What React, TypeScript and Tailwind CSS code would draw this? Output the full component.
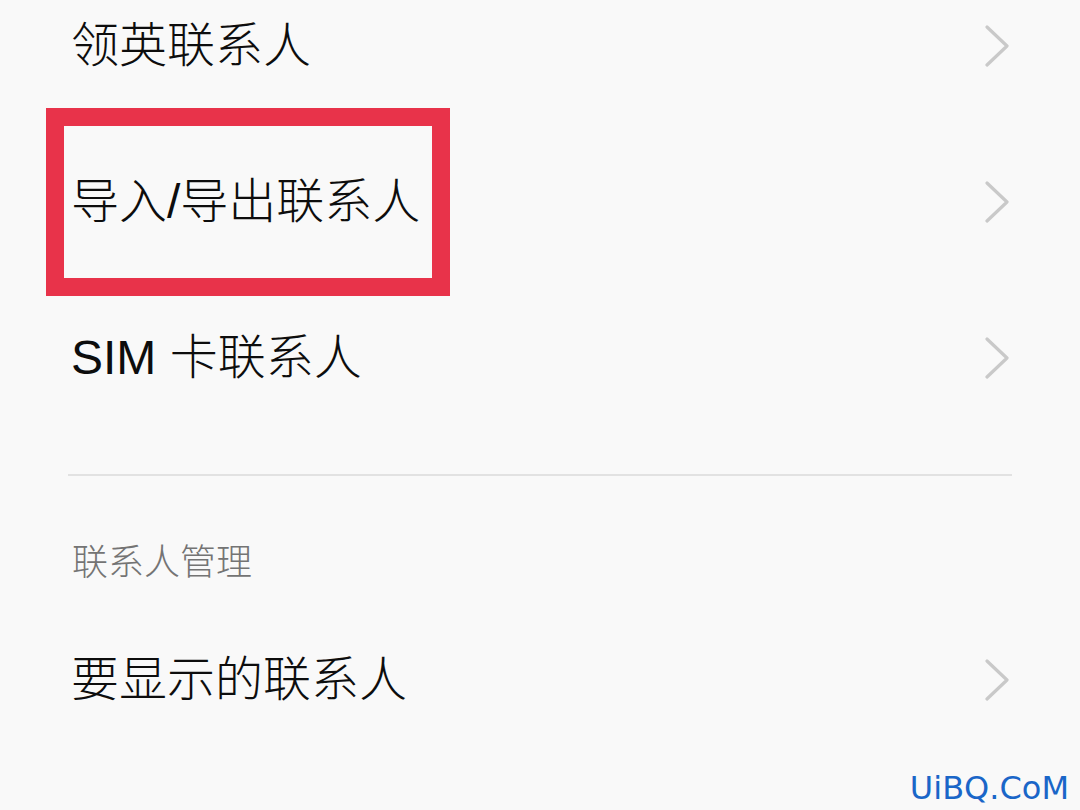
const cjk = "font-['Liberation_Sans','Noto_Sans_CJK_SC',sans-serif]";

function Row({ label }: { label: string }) {
  return (
    <div className="h-[156px] flex items-center justify-between pl-[71px] pr-[70px]">
      <span className={`${cjk} text-[48px] font-light leading-none text-[#0d0d0d]`}>{label}</span>
      <svg width="26" height="42" viewBox="0 0 26 42" fill="none" className="shrink-0">
        <path d="M3 2 L23 21 L3 40" stroke="#c9c9c9" strokeWidth="3.2" strokeLinecap="round" strokeLinejoin="round" />
      </svg>
    </div>
  );
}

export default function App() {
  return (
    <div className="relative w-[1080px] h-[810px] overflow-hidden bg-[#f9f9f9]">
      <div className="-mt-[32px] flex flex-col">
        {/* Contacts sources */}
        <Row label="领英联系人" />
        <Row label="导入/导出联系人" />
        <Row label="SIM 卡联系人" />

        <div className="mt-[38px] mx-[68px] h-[2px] bg-[#e2e2e2]" />

        {/* Management section */}
        <div className="mt-[62px] h-[50px] flex items-center pl-[72px]">
          <span className={`${cjk} text-[36px] font-light leading-none text-[#747474]`}>联系人管理</span>
        </div>
        <div className="mt-[14px]">
          <Row label="要显示的联系人" />
        </div>
      </div>

      {/* annotation box */}
      <div className="absolute left-[46px] top-[108px] w-[404px] h-[188px] border-[18px] border-[#e8334a]" />

      {/* watermark */}
      <div className="absolute right-[11px] bottom-[6px] font-['DejaVu_Sans',sans-serif] text-[32px] leading-none text-[#1a66c8]">
        UiBQ.CoM
      </div>
    </div>
  );
}
